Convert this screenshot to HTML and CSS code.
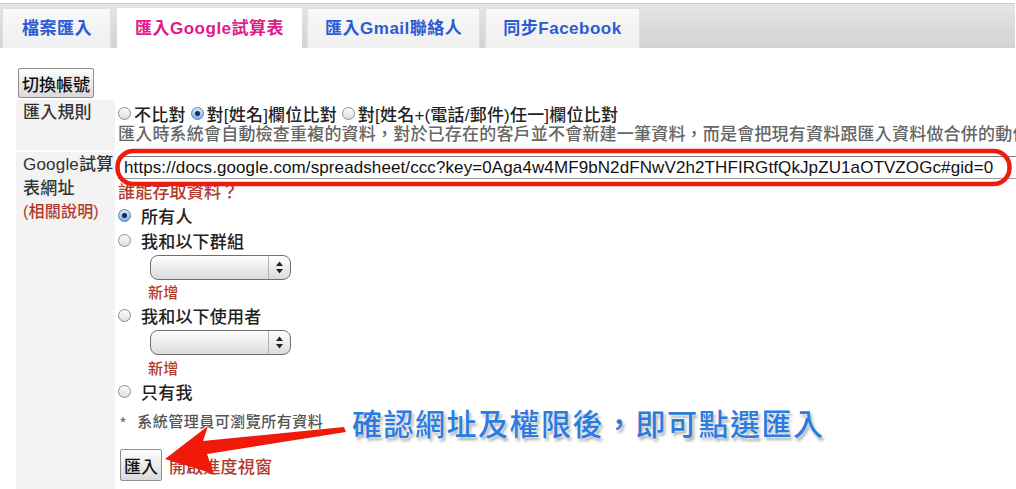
FILE: index.html
```html
<!DOCTYPE html>
<html lang="zh-Hant">
<head>
  <meta charset="UTF-8">
  <meta name="viewport" content="width=device-width, initial-scale=1">
  <title>匯入Google試算表</title>
  <link rel="stylesheet" href="styles.css">
</head>
<body>
  <div class="page">
    <ul class="tabs">
      <li class="tab">檔案匯入</li>
      <li class="tab active">匯入Google試算表</li>
      <li class="tab">匯入Gmail聯絡人</li>
      <li class="tab">同步Facebook</li>
    </ul>

    <div class="content">
      <button class="btn btn-switch">切換帳號</button>

      <table class="form">
        <tr>
          <th class="label">匯入規則</th>
          <td class="rule-cell">
            <div class="rules">
              <label class="rule"><span class="radio"></span>不比對</label>
              <label class="rule"><span class="radio checked"></span>對[姓名]欄位比對</label>
              <label class="rule"><span class="radio"></span>對[姓名+(電話/郵件)任一]欄位比對</label>
            </div>
            <div class="hint">匯入時系統會自動檢查重複的資料，對於已存在的客戶並不會新建一筆資料，而是會把現有資料跟匯入資料做合併的動作</div>
          </td>
        </tr>
        <tr>
          <th class="label label-url">Google試算<br>表網址<br><span class="help">(相關說明)</span></th>
          <td class="url-cell">
            <input class="url" type="text" value="https://docs.google.com/spreadsheet/ccc?key=0Aga4w4MF9bN2dFNwV2h2THFIRGtfQkJpZU1aOTVZOGc#gid=0">
            <div class="who">誰能存取資料？</div>

            <label class="opt opt-first"><span class="radio checked"></span>所有人</label>
            <label class="opt"><span class="radio"></span>我和以下群組</label>
            <div class="picker"><span class="picker-arrows"><svg width="9" height="13" viewBox="0 0 9 13"><path d="M4.5 0.5 L8 5 H1 Z M1 8 H8 L4.5 12.5 Z" fill="#222"/></svg></span></div>
            <div class="add">新增</div>

            <label class="opt opt-tight"><span class="radio"></span>我和以下使用者</label>
            <div class="picker"><span class="picker-arrows"><svg width="9" height="13" viewBox="0 0 9 13"><path d="M4.5 0.5 L8 5 H1 Z M1 8 H8 L4.5 12.5 Z" fill="#222"/></svg></span></div>
            <div class="add add-low">新增</div>

            <label class="opt opt-tight"><span class="radio"></span>只有我</label>

            <div class="note"><span class="star">*</span>系統管理員可瀏覽所有資料</div>

            <div class="actions">
              <button class="btn btn-import">匯入</button>
              <a href="#" class="progress">開啟進度視窗</a>
            </div>
          </td>
        </tr>
      </table>
    </div>

    <svg class="marks" width="1016" height="489" viewBox="0 0 1016 489">
      <rect x="117.5" y="151" width="892" height="33" rx="16" ry="16" fill="none" stroke="#ec1c0e" stroke-width="4.5"/>
      <polygon points="165,459 208,426 203,441 344,427 346,432 207,454 214,474" fill="#f0190a"/>
    </svg>

    <div class="callout">確認網址及權限後，即可點選匯入</div>
  </div>
</body>
</html>
```

FILE: styles.css
```css
body {
  margin: 0;
  font-family: "Liberation Sans", "Noto Sans CJK TC", sans-serif;
  font-size: 17px;
  font-weight: 500;
  letter-spacing: 0.2px;
  color: #222;
  background-color: #fff;
  overflow: hidden;
}
.page {
  position: relative;
  width: 1016px;
  height: 489px;
  overflow: hidden;
}

/* tabs */
.tabs {
  list-style: none;
  display: flex;
  gap: 5px;
  box-sizing: border-box;
  width: 1015px;
  height: 45px;
  margin: 3px 0 0;
  padding: 4px 0 0 2px;
  border-top: 1px solid #c9c9c9;
  background: linear-gradient(#e5e5e5, #d2d2d2);
}
.tab {
  height: 40px;
  line-height: 40px;
  padding: 0 17px;
  box-sizing: border-box;
  background: linear-gradient(#f8f8f8, #efefef);
  border: 1px solid #e0e0e0;
  border-bottom: none;
  color: #2d5bd3;
  font-weight: bold;
  letter-spacing: 0.5px;
}
.tab:first-child {
  padding: 0 18px 0 19px;
}
.tab.active {
  height: 41px;
  background: #fff;
  border-color: #fff;
  color: #e2188b;
  margin-left: 1px;
}

/* form */
.content {
  padding-left: 14px;
}
.btn {
  font-family: inherit;
  font-size: 17px;
  font-weight: 500;
  color: #111;
  border: 1px solid #8e8e8e;
  border-radius: 2px;
  background: linear-gradient(#fdfdfd, #dadada);
  padding: 0 3px;
}
.btn-switch {
  display: block;
  height: 30px;
  margin: 20px 0 0 4px;
}
.form {
  border-collapse: separate;
  border-spacing: 2px;
  table-layout: fixed;
  width: 1100px;
}
.label {
  width: 99px;
  box-sizing: border-box;
  background-color: #f3f3f3;
  text-align: left;
  font-weight: 500;
  color: #333;
  vertical-align: top;
  white-space: nowrap;
  padding: 2px 0 0 7px;
  line-height: 22px;
}
.label-url {
  padding-top: 1px;
  line-height: 23.5px;
  height: 340px;
}
.help {
  font-size: 16px;
  color: #b23a2c;
}
.rule-cell {
  padding: 2px 0 5px 1px;
  vertical-align: top;
}
.rules {
  display: flex;
  height: 22px;
  align-items: center;
  white-space: nowrap;
}
.rule {
  display: flex;
  align-items: center;
  gap: 3px;
  margin-right: 5px;
}
.hint {
  color: #666;
  line-height: 21px;
  white-space: nowrap;
}
.radio {
  display: inline-block;
  position: relative;
  width: 13px;
  height: 13px;
  box-sizing: border-box;
  border: 1px solid #8d8d8d;
  border-radius: 50%;
  background: linear-gradient(#fcfcfc, #dedede);
  flex-shrink: 0;
}
.radio.checked {
  border-color: #5b7fb0;
  background: linear-gradient(#d7e8fb, #7ab0ee);
}
.radio.checked::after {
  content: "";
  position: absolute;
  left: 3px;
  top: 3px;
  width: 5px;
  height: 5px;
  border-radius: 50%;
  background-color: #1b2a44;
}

.url-cell {
  padding: 4px 0 0 1px;
  vertical-align: top;
}
.url {
  display: block;
  box-sizing: border-box;
  width: 940px;
  height: 23px;
  margin: 0;
  padding: 0 5px;
  border: 1px solid #9a9a9a;
  border-top-color: #777;
  font-family: "Liberation Sans", Arial, sans-serif;
  font-size: 17px;
  letter-spacing: 0.1px;
  color: #111;
}
.who {
  line-height: 22px;
  margin-top: 3px;
  color: #b23a2c;
}
.opt {
  display: flex;
  align-items: center;
  gap: 10px;
  height: 22px;
  margin-top: 3px;
}
.opt-first {
  margin-top: 0;
}
.opt-tight {
  margin-top: 0;
}
.picker {
  position: relative;
  width: 141px;
  height: 25px;
  box-sizing: border-box;
  margin: 4px 0 0 32px;
  border: 1px solid #6f6f6f;
  border-radius: 8px;
  background: linear-gradient(#fefefe, #dcdcdc);
}
.picker-arrows {
  position: absolute;
  right: 0;
  top: 0;
  bottom: 0;
  width: 21px;
  border-left: 1px solid #b0b0b0;
  display: flex;
  align-items: center;
  justify-content: center;
}
.add {
  margin: 2px 0 0 30px;
  font-size: 15px;
  line-height: 22px;
  color: #b23a2c;
}
.add-low {
  margin-top: 3px;
}
.note {
  margin: 9px 0 0 2px;
  font-size: 15px;
  letter-spacing: 0.5px;
  line-height: 22px;
  color: #555;
}
.star {
  margin-right: 11px;
}
.actions {
  display: flex;
  align-items: center;
  margin: 16px 0 0 2px;
}
.btn-import {
  height: 32px;
  padding: 0 3px;
}
.progress {
  margin-left: 7px;
  color: #b23a2c;
  text-decoration: none;
}

/* annotations drawn over the screenshot */
.marks {
  position: absolute;
  left: 0;
  top: 0;
  pointer-events: none;
}
.callout {
  position: absolute;
  left: 352px;
  top: 404px;
  font-family: "Noto Sans CJK TC", sans-serif;
  font-size: 30px;
  font-weight: 500;
  line-height: 36px;
  letter-spacing: 1.5px;
  color: #2b7ce0;
  white-space: nowrap;
  text-shadow: 0 0 3px #fff, 2px 3px 3px rgba(0, 0, 0, 0.35);
}
```
